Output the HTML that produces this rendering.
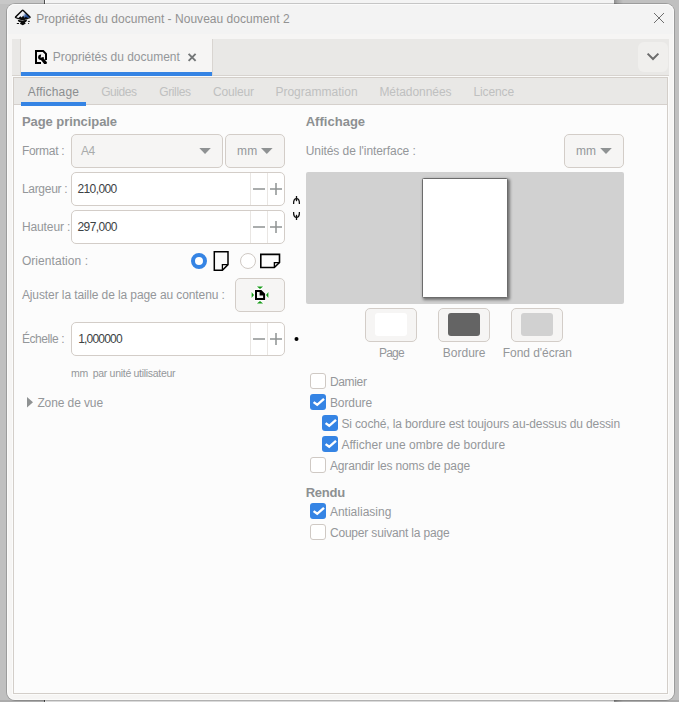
<!DOCTYPE html>
<html lang="fr">
<head>
<meta charset="utf-8">
<title>Propriétés du document - Nouveau document 2</title>
<style>
html,body{margin:0;padding:0;}
body{width:679px;height:702px;overflow:hidden;position:relative;background:#c0c0c0;font-family:"Liberation Sans",sans-serif;}
.abs{position:absolute;box-sizing:border-box;}
.t{position:absolute;white-space:pre;}
#bgwhite{left:45px;top:0;width:569px;height:702px;background:#f3f3f3;border-left:1px solid #fff;}
#bgsh{left:614px;top:0;width:9px;height:702px;background:linear-gradient(to right,#8e8e8e,#a9a9a9 40%,#c0c0c0);}
#bgtl{left:0;top:0;width:44px;height:4px;background:#c8c8c8;}
#bgline{left:44px;top:0;width:1px;height:702px;background:#4f4f4f;}
#win{left:7px;top:4px;width:667px;height:696px;border-radius:8px;background:#f6f5f4;box-shadow:0 0 0 1px rgba(0,0,0,.19);overflow:hidden;}
#winhl{left:7px;top:4px;width:667px;height:696px;border-radius:8px;box-shadow:inset 0 0 0 1px rgba(255,255,255,.55);}
#titlebar{left:0;top:0;width:667px;height:30px;background:#f3f3f3;}
#tabbar{left:12px;top:39px;width:657px;height:37px;background:#e9e8e6;border-bottom:1px solid #d7d3cf;}
#acttab{left:20px;top:39px;width:193px;height:37px;background:#f6f5f4;border-left:1px solid #d9d5d1;border-right:1px solid #d9d5d1;}
#actline{left:21px;top:72px;width:191px;height:4px;background:#3584e4;}
#ddbtn{left:638px;top:42px;width:30px;height:30px;border-radius:6px;background:#f0efed;}
#panel{left:13px;top:77px;width:655px;height:617px;border:1px solid #d3cec9;background:#fcfcfc;box-shadow:0 0 0 1px #fbfbfa;}
#ihdr{left:14px;top:78px;width:653px;height:27px;background:#e9e8e6;border-bottom:1px solid #d5d0cc;}
#iline{left:21px;top:102px;width:65px;height:4px;background:#3584e4;}
.combo{border:1px solid #d3cdc8;border-radius:5px;background:#f6f5f4;}
.entry{border:1px solid #d3cdc8;border-radius:5px;background:#ffffff;}
.sep{width:1px;background:#e9e6e3;}
.cb{width:16px;height:16px;border-radius:3px;border:1px solid #cfc9c4;background:#fff;}
.cb.on{border:none;background:#3584e4;}
svg{position:absolute;left:0;top:0;overflow:visible;}
</style>
</head>
<body>
<div class="abs" id="bgwhite"></div>
<div class="abs" id="bgline"></div>
<div class="abs" id="bgtl"></div>
<div class="abs" id="bgsh"></div>
<div class="abs" style="left:0;top:700px;width:679px;height:2px;background:rgba(0,0,0,.1)"></div>
<div class="abs" id="win"><div class="abs" id="titlebar"></div></div>
<div class="abs" id="winhl"></div>

<div class="abs" id="tabbar"></div>
<div class="abs" id="acttab"></div>
<div class="abs" id="actline"></div>
<div class="abs" id="ddbtn"></div>
<div class="abs" id="panel"></div>
<div class="abs" id="ihdr"></div>
<div class="abs" id="iline"></div>

<!-- left column widgets -->
<div class="abs combo" style="left:71px;top:134px;width:152px;height:34px"></div>
<div class="abs combo" style="left:225px;top:134px;width:60px;height:34px"></div>
<div class="abs entry" style="left:71px;top:172px;width:214px;height:34px"></div>
<div class="abs sep" style="left:250px;top:173px;height:32px"></div>
<div class="abs sep" style="left:267px;top:173px;height:32px"></div>
<div class="abs entry" style="left:71px;top:210px;width:214px;height:34px"></div>
<div class="abs sep" style="left:250px;top:211px;height:32px"></div>
<div class="abs sep" style="left:267px;top:211px;height:32px"></div>
<div class="abs combo" style="left:235px;top:278px;width:50px;height:34px"></div>
<div class="abs entry" style="left:71px;top:322px;width:214px;height:34px"></div>
<div class="abs sep" style="left:250px;top:323px;height:32px"></div>
<div class="abs sep" style="left:267px;top:323px;height:32px"></div>

<!-- right column widgets -->
<div class="abs combo" style="left:564px;top:134px;width:60px;height:34px"></div>
<div class="abs" style="left:306px;top:172px;width:318px;height:131.5px;background:#d1d1d1;border-radius:2px"></div>
<div class="abs" style="left:422.4px;top:178.2px;width:85.5px;height:120px;background:#fff;border:1px solid #6c6c6c;border-radius:1.5px;box-shadow:1.5px 1.5px 3px rgba(0,0,0,.45)"></div>
<div class="abs combo" style="left:365px;top:308px;width:52px;height:34px"></div>
<div class="abs combo" style="left:438px;top:308px;width:52px;height:34px"></div>
<div class="abs combo" style="left:511px;top:308px;width:52px;height:34px"></div>
<div class="abs" style="left:374.5px;top:313px;width:32.5px;height:23px;border-radius:3px;background:#ffffff"></div>
<div class="abs" style="left:447.5px;top:313px;width:32.5px;height:23px;border-radius:3px;background:#646464"></div>
<div class="abs" style="left:520.5px;top:313px;width:32.5px;height:23px;border-radius:3px;background:#d1d1d1"></div>

<div class="abs cb" style="left:310px;top:373px"></div>
<div class="abs cb on" style="left:310px;top:394px"></div>
<div class="abs cb on" style="left:322px;top:415px"></div>
<div class="abs cb on" style="left:322px;top:436px"></div>
<div class="abs cb" style="left:310px;top:457px"></div>
<div class="abs cb on" style="left:310px;top:503px"></div>
<div class="abs cb" style="left:310px;top:524px"></div>

<!-- radios -->
<div class="abs" style="left:191px;top:253px;width:16px;height:16px;border-radius:50%;border:4px solid #3584e4;background:#fff"></div>
<div class="abs" style="left:240px;top:253px;width:16px;height:16px;border-radius:50%;border:1px solid #cfc9c4;background:#fff"></div>

<svg width="679" height="702" viewBox="0 0 679 702">
<defs><linearGradient id="lg" gradientUnits="userSpaceOnUse" x1="19.5" y1="12.5" x2="29" y2="18.5"><stop offset="0" stop-color="#ffffff"/><stop offset="0.38" stop-color="#e4e8f0"/><stop offset="0.6" stop-color="#3c64a8"/><stop offset="0.88" stop-color="#173f86"/><stop offset="1" stop-color="#9db4dc"/></linearGradient></defs>
<g>
<path d="M22.7,9.6 Q23.4,9.6 24,10.2 L30.5,16.6 Q31.4,17.7 30,18.3 L26,19.5 Q22.7,20.5 19.4,19.5 L15.6,18.3 Q14.2,17.7 15,16.6 L21.4,10.2 Q22,9.6 22.7,9.6 Z" fill="#0a0a0a"/>
<path d="M22.7,11 L29.6,17.4 L27.6,18.1 L25.8,16.8 L24.6,18 L23.2,15.8 L21.6,17.4 L20.4,16.2 L18.4,18 L16.4,17.3 Z" fill="url(#lg)"/>
<path d="M17.6,19.7 Q22.7,21.2 27.4,19.6 L26.2,21.8 L24.8,22.4 L25.8,23.5 L22.8,25.3 L19.8,23.7 L21,22.6 L18.6,21.8 Z" fill="#0a0a0a"/>
<rect x="16.8" y="23" width="2.2" height="1" fill="#111"/>
<rect x="27.9" y="20.9" width="2" height="0.9" fill="#111"/>
<rect x="28.1" y="23" width="1" height="0.9" fill="#111"/>
</g>
<path d="M654,13 L664,23 M664,13 L654,23" stroke="#6e6e6e" stroke-width="1" fill="none"/>
<g>
<path d="M41,63 H36 V51 H43.2 L46,53.8 V60" fill="none" stroke="#000" stroke-width="2" stroke-linejoin="miter"/>
<circle cx="40.9" cy="57.2" r="2.75" fill="#000"/>
<path d="M40.5,57.7 L41.5,53.4 L45.2,56.6 Z" fill="#f6f5f4"/>
<path d="M41.8,58.2 L46.3,63.3 L47.2,64 H44.2 L40.6,59.6 Z" fill="#000"/>
<path d="M42,58.3 L46.2,63.2" stroke="#000" stroke-width="2.5" fill="none"/>
</g>
<path d="M188.6,53.8 L195.6,60.8 M195.6,53.8 L188.6,60.8" stroke="#737677" stroke-width="1.9" fill="none"/>
<path d="M647.6,53.6 L653,59 L658.4,53.6" stroke="#6c6c6c" stroke-width="2" fill="none"/>
<path d="M199.3,148 H210.8 L205.05,154 Z" fill="#8f9293"/>
<path d="M261,148 H272.6 L266.8,154 Z" fill="#8f9293"/>
<path d="M600.2,148 H611.8 L606.0,154 Z" fill="#8f9293"/>
<rect x="253" y="188.25" width="12" height="1.5" fill="#8f9293"/><rect x="270" y="188.25" width="12" height="1.5" fill="#8f9293"/><rect x="275.25" y="183" width="1.5" height="12" fill="#8f9293"/>
<rect x="253" y="226.25" width="12" height="1.5" fill="#8f9293"/><rect x="270" y="226.25" width="12" height="1.5" fill="#8f9293"/><rect x="275.25" y="221" width="1.5" height="12" fill="#8f9293"/>
<rect x="253" y="338.25" width="12" height="1.5" fill="#8f9293"/><rect x="270" y="338.25" width="12" height="1.5" fill="#8f9293"/><rect x="275.25" y="333" width="1.5" height="12" fill="#8f9293"/>
<g fill="none" stroke="#111" stroke-width="1.3">
<path d="M293.6,204 C293.4,199.5 295,198.6 296.5,198.6 C298,198.6 299.6,199.5 299.4,204"/>
<path d="M296.5,196 V201.2"/>
<path d="M293.6,212 C293.4,216.5 295,217.4 296.5,217.4 C298,217.4 299.6,216.5 299.4,212"/>
<path d="M296.5,214.8 V220"/>
</g>
<circle cx="296.5" cy="339" r="2" fill="#000"/>
<g fill="none" stroke="#000">
<path d="M214.3,251.8 H228 V264.6 L222.4,270.2 H214.3 Z" stroke-width="1.5"/>
<path d="M222.4,270 V264.6 H228" stroke-width="1.3"/>
</g>
<g fill="none" stroke="#000">
<path d="M260.8,254.4 H279.5 V262.5 L274.3,267.5 H260.8 Z" stroke-width="1.6"/>
<path d="M274.4,267.3 V262.6 H279.4" stroke-width="1.4"/>
</g>
<g>
<g stroke="#fff" stroke-width="2" stroke-linejoin="round" fill="#fff" opacity="0.85">
<path d="M257.2,286.9 H262.8 L260,288.7 Z"/><path d="M257.2,303.1 H262.8 L260,301.3 Z"/>
<path d="M251.9,292.3 V297.7 L253.8,295 Z"/><path d="M268.1,292.3 V297.7 L266.2,295 Z"/>
<path d="M255,290.1 H261.4 L265.1,293.8 V299.9 H255 Z"/>
</g>
<path d="M256.9,286.6 H263.1 L260,289 Z" fill="#179a17"/>
<path d="M256.9,303.4 H263.1 L260,301 Z" fill="#179a17"/>
<path d="M251.6,292 V298 L254,295 Z" fill="#179a17"/>
<path d="M268.4,292 V298 L266,295 Z" fill="#179a17"/>
<path d="M255,290.1 H261.4 L265.1,293.8 V299.9 H255 Z" fill="#000"/>
<path d="M257,292 H259.6 V295.4 H263.1 V298 H257 Z" fill="#f0f0f0"/>
</g>
<path d="M27,397 L33,402.2 L27,407.4 Z" fill="#8f9293"/>
<path d="M313.6,402.1 L317.2,404.8 L324,398.9" fill="none" stroke="#fff" stroke-width="2.4"/>
<path d="M325.6,423.1 L329.2,425.8 L336,419.9" fill="none" stroke="#fff" stroke-width="2.4"/>
<path d="M325.6,444.1 L329.2,446.8 L336,440.9" fill="none" stroke="#fff" stroke-width="2.4"/>
<path d="M313.6,511.1 L317.2,513.8 L324,507.9" fill="none" stroke="#fff" stroke-width="2.4"/>
</svg>

<span class="t" style="left:36.20px;top:12.84px;font-size:12px;line-height:12px;font-weight:400;color:#929292;letter-spacing:0.030px">Propriétés du document - Nouveau document 2</span>
<span class="t" style="left:52.70px;top:50.84px;font-size:12px;line-height:12px;font-weight:400;color:#94979a;letter-spacing:-0.015px">Propriétés du document</span>
<span class="t" style="left:27.70px;top:85.84px;font-size:12px;line-height:12px;font-weight:400;color:#8b8e90;letter-spacing:0.184px">Affichage</span>
<span class="t" style="left:101.20px;top:85.84px;font-size:12px;line-height:12px;font-weight:400;color:#bfc0c0;letter-spacing:-0.466px">Guides</span>
<span class="t" style="left:159.20px;top:85.84px;font-size:12px;line-height:12px;font-weight:400;color:#bfc0c0;letter-spacing:-0.353px">Grilles</span>
<span class="t" style="left:212.90px;top:85.84px;font-size:12px;line-height:12px;font-weight:400;color:#bfc0c0;letter-spacing:-0.139px">Couleur</span>
<span class="t" style="left:275.40px;top:85.84px;font-size:12px;line-height:12px;font-weight:400;color:#bfc0c0;letter-spacing:0.014px">Programmation</span>
<span class="t" style="left:379.40px;top:85.84px;font-size:12px;line-height:12px;font-weight:400;color:#bfc0c0;letter-spacing:-0.053px">Métadonnées</span>
<span class="t" style="left:473.40px;top:85.84px;font-size:12px;line-height:12px;font-weight:400;color:#bfc0c0;letter-spacing:-0.113px">Licence</span>
<span class="t" style="left:21.90px;top:115.00px;font-size:13px;line-height:13px;font-weight:700;color:#8d9092;letter-spacing:-0.064px">Page principale</span>
<span class="t" style="left:21.90px;top:144.84px;font-size:12px;line-height:12px;font-weight:400;color:#94979a;letter-spacing:-0.282px">Format :</span>
<span class="t" style="left:81.00px;top:144.84px;font-size:12px;line-height:12px;font-weight:400;color:#a9abab;letter-spacing:-0.587px">A4</span>
<span class="t" style="left:237.00px;top:144.84px;font-size:12px;line-height:12px;font-weight:400;color:#94979a;letter-spacing:0.300px">mm</span>
<span class="t" style="left:21.90px;top:182.84px;font-size:12px;line-height:12px;font-weight:400;color:#94979a;letter-spacing:-0.291px">Largeur :</span>
<span class="t" style="left:77.40px;top:182.84px;font-size:12px;line-height:12px;font-weight:400;color:#3c4244;letter-spacing:-0.582px">210,000</span>
<span class="t" style="left:21.90px;top:220.84px;font-size:12px;line-height:12px;font-weight:400;color:#94979a;letter-spacing:-0.107px">Hauteur :</span>
<span class="t" style="left:77.40px;top:220.84px;font-size:12px;line-height:12px;font-weight:400;color:#3c4244;letter-spacing:-0.548px">297,000</span>
<span class="t" style="left:21.90px;top:254.84px;font-size:12px;line-height:12px;font-weight:400;color:#94979a;letter-spacing:0.060px">Orientation :</span>
<span class="t" style="left:21.90px;top:288.84px;font-size:12px;line-height:12px;font-weight:400;color:#94979a;letter-spacing:-0.095px">Ajuster la taille de la page au contenu :</span>
<span class="t" style="left:21.90px;top:332.84px;font-size:12px;line-height:12px;font-weight:400;color:#94979a;letter-spacing:-0.416px">Échelle :</span>
<span class="t" style="left:78.20px;top:332.84px;font-size:12px;line-height:12px;font-weight:400;color:#3c4244;letter-spacing:-0.809px">1,000000</span>
<span class="t" style="left:70.90px;top:368.11px;font-size:10.5px;line-height:10.5px;font-weight:400;color:#94979a;letter-spacing:-0.200px">mm</span>
<span class="t" style="left:92.70px;top:368.11px;font-size:10.5px;line-height:10.5px;font-weight:400;color:#94979a;letter-spacing:-0.291px">par unité utilisateur</span>
<span class="t" style="left:37.40px;top:396.84px;font-size:12px;line-height:12px;font-weight:400;color:#94979a;letter-spacing:-0.102px">Zone de vue</span>
<span class="t" style="left:305.70px;top:115.00px;font-size:13px;line-height:13px;font-weight:700;color:#8d9092;letter-spacing:0.021px">Affichage</span>
<span class="t" style="left:305.70px;top:144.84px;font-size:12px;line-height:12px;font-weight:400;color:#94979a;letter-spacing:-0.072px">Unités de l'interface :</span>
<span class="t" style="left:575.90px;top:144.84px;font-size:12px;line-height:12px;font-weight:400;color:#94979a;letter-spacing:0.200px">mm</span>
<span class="t" style="left:379.10px;top:346.84px;font-size:12px;line-height:12px;font-weight:400;color:#94979a;letter-spacing:-0.844px">Page</span>
<span class="t" style="left:442.80px;top:346.84px;font-size:12px;line-height:12px;font-weight:400;color:#94979a;letter-spacing:-0.001px">Bordure</span>
<span class="t" style="left:502.80px;top:346.84px;font-size:12px;line-height:12px;font-weight:400;color:#94979a;letter-spacing:-0.052px">Fond d'écran</span>
<span class="t" style="left:329.90px;top:375.84px;font-size:12px;line-height:12px;font-weight:400;color:#94979a;letter-spacing:-0.334px">Damier</span>
<span class="t" style="left:329.90px;top:396.84px;font-size:12px;line-height:12px;font-weight:400;color:#94979a;letter-spacing:-0.084px">Bordure</span>
<span class="t" style="left:341.40px;top:417.84px;font-size:12px;line-height:12px;font-weight:400;color:#94979a;letter-spacing:-0.131px">Si coché, la bordure est toujours au-dessus du dessin</span>
<span class="t" style="left:341.40px;top:438.84px;font-size:12px;line-height:12px;font-weight:400;color:#94979a;letter-spacing:0.041px">Afficher une ombre de bordure</span>
<span class="t" style="left:329.90px;top:459.84px;font-size:12px;line-height:12px;font-weight:400;color:#94979a;letter-spacing:-0.134px">Agrandir les noms de page</span>
<span class="t" style="left:305.70px;top:485.50px;font-size:13px;line-height:13px;font-weight:700;color:#8d9092;letter-spacing:-0.263px">Rendu</span>
<span class="t" style="left:329.90px;top:506.34px;font-size:12px;line-height:12px;font-weight:400;color:#94979a;letter-spacing:0.011px">Antialiasing</span>
<span class="t" style="left:329.90px;top:526.84px;font-size:12px;line-height:12px;font-weight:400;color:#94979a;letter-spacing:-0.177px">Couper suivant la page</span>
</body>
</html>
